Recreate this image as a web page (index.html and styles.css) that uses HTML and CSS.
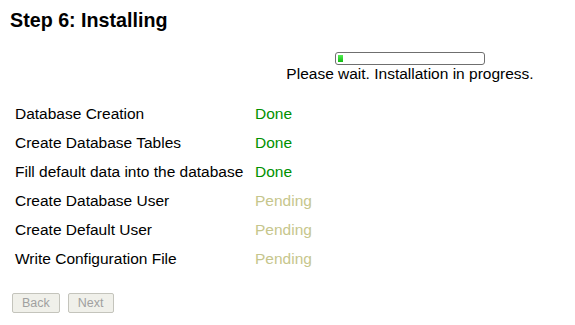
FILE: index.html
```html
<!doctype html>
<html>
	<head>
		<title>Step 6: Installing</title>
		<meta charset="utf8">
		<link rel="stylesheet" href="styles.css">
	</head>
	<body>
		<h1>Step 6: Installing</h1>
		<div class="progress">
			<div class="bar"><span class="fill"></span></div>
			<p>Please wait. Installation in progress.</p>
		</div>
		<table class="steps">
			<tr><td class="task">Database Creation</td><td class="done">Done</td></tr>
			<tr><td class="task">Create Database Tables</td><td class="done">Done</td></tr>
			<tr><td class="task">Fill default data into the database</td><td class="done">Done</td></tr>
			<tr><td class="task">Create Database User</td><td class="pending">Pending</td></tr>
			<tr><td class="task">Create Default User</td><td class="pending">Pending</td></tr>
			<tr><td class="task">Write Configuration File</td><td class="pending">Pending</td></tr>
		</table>
		<div class="buttons">
			<button disabled>Back</button>
			<button disabled>Next</button>
		</div>
	</body>
</html>
```

FILE: styles.css
```css
html, body {
	margin: 0;
	padding: 0;
	background: #fff;
	color: #000;
}
body {
	font-family: "Liberation Sans", Arial, sans-serif;
	font-size: 15.5px;
	padding: 9px 10px 0 10px;
}
h1 {
	font-size: 19.7px;
	font-weight: bold;
	margin: 0;
	line-height: 22px;
}
.progress {
	display: flex;
	flex-direction: column;
	align-items: center;
	width: 250px;
	margin: 21px 0 0 275px;
}
.bar {
	border: 1px solid #6f6f6f;
	border-radius: 3px;
	padding: 2px;
	width: 144px;
	height: 7px;
	background: #fff;
}
.fill {
	display: block;
	width: 5px;
	height: 7px;
	background: linear-gradient(#5e5, #1b1);
}
.progress p {
	margin: 0;
	line-height: 18px;
	white-space: nowrap;
}
.steps {
	border-collapse: collapse;
	margin: 16px 0 0 5px;
}
.steps td {
	padding: 0;
	height: 29px;
	line-height: 17px;
	vertical-align: middle;
}
.steps .task {
	width: 240px;
}
.done {
	color: #009100;
}
.pending {
	color: #c6c68c;
}
.buttons {
	display: flex;
	gap: 8px;
	margin: 20px 0 0 2px;
}
button {
	font-family: "Liberation Sans", Arial, sans-serif;
	font-size: 12.5px;
	color: #a0a0a0;
	background: #f0f0ea;
	border: 1px solid #c4c4bc;
	border-radius: 2px;
	padding: 0 9px;
	height: 20px;
	line-height: 18px;
}
```
